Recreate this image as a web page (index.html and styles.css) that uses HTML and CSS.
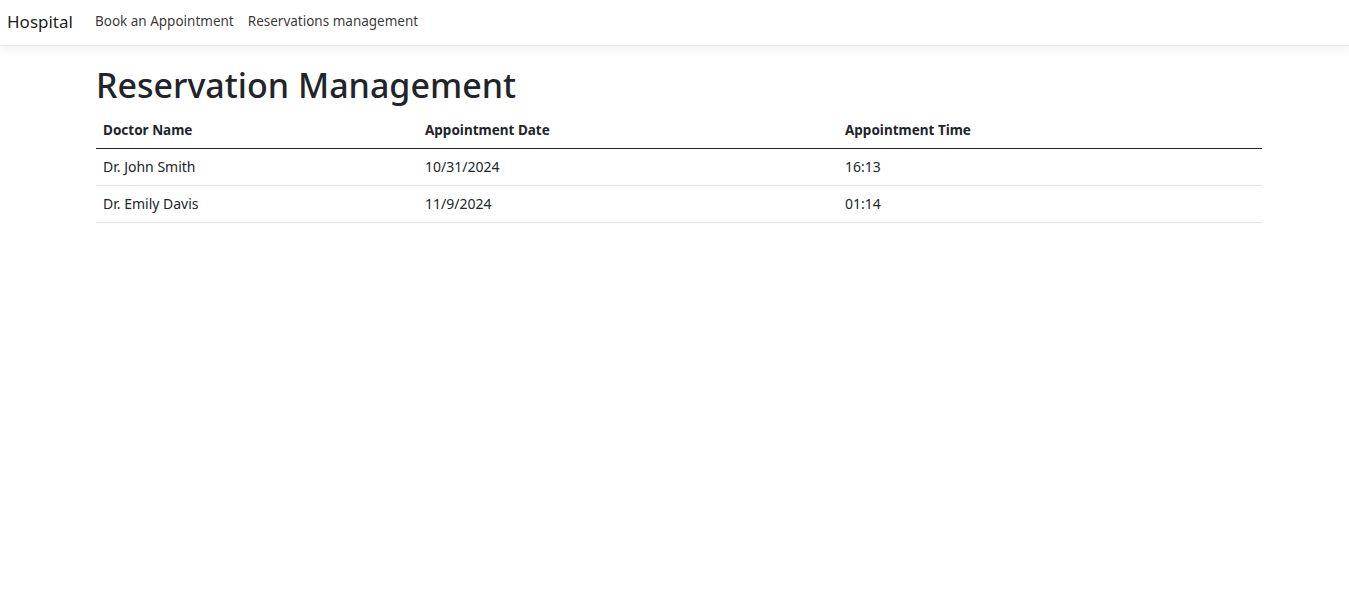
FILE: index.html
```html
<!DOCTYPE html>
<html lang="en">
<head>
<meta charset="utf-8">
<title>Hospital</title>
<link rel="stylesheet" href="styles.css">
</head>
<body>
<header class="navbar">
  <a class="brand" href="#">Hospital</a>
  <nav class="nav">
    <a class="nav-link" href="#">Book an Appointment</a>
    <a class="nav-link" href="#">Reservations management</a>
  </nav>
</header>
<main class="container">
  <h1 class="title">Reservation Management</h1>
  <table class="table">
    <thead>
      <tr>
        <th class="c1">Doctor Name</th>
        <th class="c2">Appointment Date</th>
        <th class="c3">Appointment Time</th>
      </tr>
    </thead>
    <tbody>
      <tr>
        <td>Dr. John Smith</td>
        <td>10/31/2024</td>
        <td>16:13</td>
      </tr>
      <tr>
        <td>Dr. Emily Davis</td>
        <td>11/9/2024</td>
        <td>01:14</td>
      </tr>
    </tbody>
  </table>
</main>
</body>
</html>
```
FILE: styles.css
```css
* { box-sizing: border-box; }
html, body { margin: 0; padding: 0; }
body {
  font-family: "Noto Sans", "Open Sans", sans-serif;
  color: #212529;
  background: #fff;
  font-size: 14px;
  line-height: 1.5;
}
a { text-decoration: none; }
.navbar {
  display: flex;
  align-items: center;
  height: 46px;
  padding: 0 7px 2px 7px;
  border-bottom: 1px solid #e5e5e5;
  box-shadow: 0 4px 10px rgba(0, 0, 0, 0.05);
  background: #fff;
}
.brand {
  font-size: 17px;
  color: rgba(0, 0, 0, 0.9);
  margin-right: 15px;
}
.nav { display: flex; }
.nav-link {
  font-size: 13.5px;
  color: rgba(0, 0, 0, 0.8);
  padding: 0 7px;
}
.container {
  margin-left: 96px;
  width: 1166px;
  padding-top: 18px;
}
.title {
  font-size: 34px;
  font-weight: 500;
  line-height: 42px;
  margin: 0 0 6px 0;
}
.table {
  width: 100%;
  border-collapse: collapse;
  font-size: 14px;
}
.table th, .table td {
  text-align: left;
  padding: 8px 7px;
  line-height: 20px;
  border-bottom: 1px solid #dee2e6;
  vertical-align: bottom;
}
.table th { font-size: 13.5px; font-weight: 700; border-bottom: 1px solid #212529; }
.c1 { width: 322px; }
.c2 { width: 420px; }
.c3 { width: 424px; }
```
